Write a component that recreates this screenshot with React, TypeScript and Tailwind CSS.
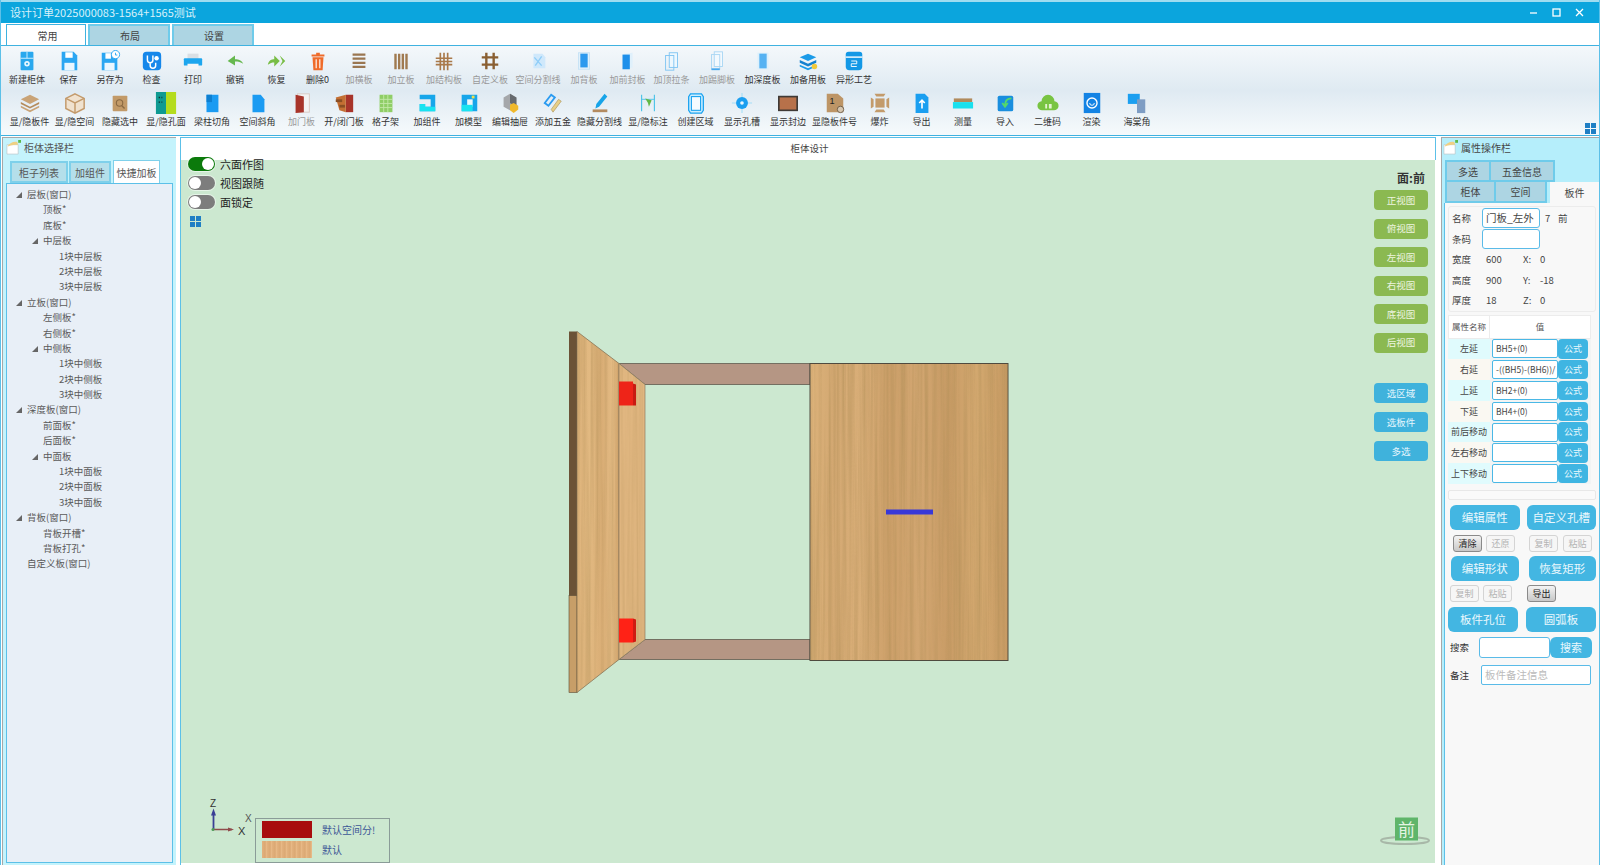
import type { ReactNode } from 'react';

const BLUE = '#2ba6f2';

function Svg({ children, className = 'h-6 w-6' }: { children: ReactNode; className?: string }) {
  return (
    <svg viewBox="0 0 24 24" className={className}>
      {children}
    </svg>
  );
}

const icons: Record<string, ReactNode> = {
  newCab: (
    <>
      <rect x="5" y="2" width="14" height="20" rx="1" fill="#29a8ee" />
      <path d="M12 2v7M5 9h14" stroke="#d8f2ff" strokeWidth="1" />
      <circle cx="12" cy="15" r="3" fill="#e8f8ff" />
      <circle cx="12" cy="15" r="1.2" fill="#29a8ee" />
    </>
  ),
  save: (
    <>
      <path d="M4 2h13l4 4v16H4z" fill={BLUE} />
      <rect x="8" y="2.5" width="8" height="6" fill="#fff" />
      <rect x="7" y="14" width="11" height="8" fill="#e9f6ff" />
    </>
  ),
  saveAs: (
    <>
      <path d="M3 3h13l4 4v15H3z" fill={BLUE} />
      <rect x="7" y="3.5" width="6" height="6" fill="#fff" />
      <rect x="6" y="14" width="11" height="8" fill="#e9f6ff" />
      <circle cx="18" cy="5" r="4.5" fill="#fff" stroke={BLUE} strokeWidth="1" />
      <path d="M18 3v2.5h2" stroke={BLUE} fill="none" />
    </>
  ),
  check: (
    <>
      <rect x="2" y="2" width="20" height="20" rx="4" fill="#1687ea" />
      <path d="M7 6v5a3 3 0 0 0 6 0V6M10 14v3a3 3 0 0 0 6 0v-3" stroke="#fff" strokeWidth="1.6" fill="none" />
      <circle cx="17" cy="9" r="2.4" fill="#fff" />
    </>
  ),
  print: (
    <>
      <rect x="6" y="4" width="12" height="6" fill="#d9dfe4" />
      <rect x="2" y="9" width="20" height="8" rx="1" fill="#1ea6ee" />
      <rect x="6" y="15" width="12" height="6" fill="#f4f6f7" />
    </>
  ),
  undo: <path d="M4 12l8-6v4c4 0 7 1 9 5-3-2-5-2.500-9-2.500V17z" fill="#66b84f" />,
  redo: (
    <>
      <path d="M15 12l-6-6v4C6 10 3 11 2 16c3-2 4-2.500 7-2.500V18z" fill="#78bd45" />
      <path d="M15 6l6 6-6 6 3-6z" fill="#78bd45" />
    </>
  ),
  trash: (
    <>
      <path d="M6 8h12l-1 14H7z" fill="#ef6b2a" />
      <path d="M5 5h14v2H5zM10 3h4v2h-4z" fill="#ef6b2a" />
      <path d="M10 10v10M14 10v10" stroke="#fff" strokeWidth="1.200" />
    </>
  ),
  hBoards: <path d="M5 5h14M5 9.500h14M5 14h14M5 18.500h14" stroke="#9a7650" strokeWidth="2.400" />,
  vBoards: <path d="M6 4v17M10 4v17M14 4v17M18 4v17" stroke="#a07a50" strokeWidth="2.600" />,
  struct: (
    <>
      <path d="M8 3v19M12 3v19M16 3v19" stroke="#a9794a" strokeWidth="1.800" />
      <path d="M3 9h18M3 12.500h18M3 16h18" stroke="#a9794a" strokeWidth="1.800" />
    </>
  ),
  hash: <path d="M8 3v18M16 3v18M3 8h18M3 16h18" stroke="#8a5f32" strokeWidth="2.600" />,
  split: (
    <>
      <path d="M7 4h10l3 4v12H7z" fill="#cfe8fb" />
      <path d="M8 8l8 9M16 7l-7 10" stroke="#8fcdf8" strokeWidth="1.500" />
    </>
  ),
  back: (
    <>
      <rect x="6" y="3" width="12" height="18" fill="#e2f1fb" stroke="#c6e2f5" />
      <rect x="8" y="4" width="8" height="15" fill="#2c99ee" />
    </>
  ),
  front: (
    <>
      <path d="M8 4l9-1v16l-9 2z" fill="#dff0fb" />
      <rect x="6" y="5" width="8" height="16" fill="#1e8fea" />
    </>
  ),
  top: (
    <>
      <rect x="9" y="3" width="9" height="16" fill="#eef8fe" stroke="#7fc4f2" />
      <rect x="5" y="6" width="9" height="16" fill="none" stroke="#7fc4f2" />
    </>
  ),
  kick: (
    <>
      <rect x="9" y="2" width="9" height="16" fill="#f3f9fe" stroke="#a9d6f4" />
      <rect x="6" y="5" width="9" height="16" fill="none" stroke="#a9d6f4" />
      <path d="M6 21h9" stroke="#48a8ee" strokeWidth="2" />
    </>
  ),
  depth: (
    <>
      <rect x="6" y="3" width="12" height="18" fill="#dcf0fc" />
      <rect x="8" y="4" width="8" height="16" fill="#56b2f2" />
    </>
  ),
  spare: (
    <>
      <path d="M12 4l9 4-9 4-9-4z" fill="#1b9be8" />
      <path d="M3 11l9 4 9-4v3l-9 4-9-4z" fill="#1481cf" />
      <path d="M3 16l9 4 9-4v2l-9 4-9-4z" fill="#1b9be8" />
      <circle cx="19" cy="18" r="3" fill="#f1c93b" />
    </>
  ),
  basket: (
    <>
      <path d="M6 2h12a3 3 0 0 1 3 3v13a4 4 0 0 1-4 4H7a4 4 0 0 1-4-4V5a3 3 0 0 1 3-3z" fill="#1398e6" />
      <rect x="3" y="7" width="18" height="1.500" fill="#fff" />
      <path d="M9 12h6M9 15h6M9 18h6M15 12v3M9 15v3" stroke="#fff" strokeWidth="1" fill="none" />
    </>
  ),
  stack: (
    <>
      <path d="M12 3l10 5-10 5L2 8z" fill="#c9a376" />
      <path d="M2 11l10 5 10-5v2l-10 5-10-5z" fill="#b58c5c" />
      <path d="M2 15l10 5 10-5v2l-10 5-10-5z" fill="#c9a376" />
    </>
  ),
  box: (
    <>
      <path d="M12 2l10 5v11l-10 5-10-5V7z" fill="#f0e2cf" stroke="#c39a6b" strokeWidth="1.600" />
      <path d="M2 7l10 5 10-5M12 12v11" stroke="#c39a6b" strokeWidth="1.600" fill="none" />
    </>
  ),
  hide: (
    <>
      <rect x="4" y="4" width="16" height="17" rx="1" fill="#c29a68" />
      <circle cx="11.500" cy="12" r="3.500" fill="none" stroke="#8b6a43" strokeWidth="1.200" />
      <path d="M14 15l3 3" stroke="#8b6a43" strokeWidth="1.500" />
    </>
  ),
  face: (
    <>
      <rect x="1" y="0" width="11" height="24" fill="#0f9a92" />
      <rect x="12" y="0" width="11" height="24" fill="#b4dc1e" />
      <path d="M4 6h4M4 11h4" stroke="#133" strokeWidth="1.500" strokeDasharray="1.500 1.500" />
    </>
  ),
  beam: (
    <>
      <path d="M6 3h13v19H6z" fill="#1b9bf2" />
      <path d="M6 3h6v8H6z" fill="#0e7fd0" />
    </>
  ),
  bevel: <path d="M6 3h9l4 5v14H6z" fill="#1b9bf2" />,
  door: (
    <>
      <rect x="7" y="2" width="13" height="20" fill="#f3f3f3" stroke="#d8c9c2" />
      <path d="M5 3l9 2v17l-9 1z" fill="#a8342a" />
    </>
  ),
  doors: (
    <>
      <rect x="14" y="3" width="8" height="19" fill="#a8342a" />
      <path d="M3 6l11-3v19l-7-2z" fill="#c46f33" />
      <rect x="3" y="8" width="7" height="3" fill="#8a4e23" />
      <rect x="7" y="14" width="6" height="3" fill="#8a4e23" />
    </>
  ),
  grid: (
    <>
      <rect x="5" y="3" width="14" height="19" fill="#8fce66" />
      <path d="M9.500 3v19M14 3v19M5 8h14M5 12.500h14M5 17h14" stroke="#c4e8a8" strokeWidth="1" />
    </>
  ),
  comp: (
    <>
      <path d="M4 3h17v18H4v-8h6v3h6V8H4z" fill="#17a6ea" />
      <path d="M4 13h6v3h11v5H4z" fill="#19e3f0" />
    </>
  ),
  model: (
    <>
      <rect x="4" y="3" width="17" height="18" fill="#17a6ea" />
      <rect x="10" y="8" width="6" height="8" fill="#eef7fb" />
      <rect x="4" y="14" width="12" height="7" fill="#19e3f0" />
      <rect x="15" y="4" width="3" height="3" fill="#f4e04a" />
    </>
  ),
  drawer: (
    <>
      <path d="M5 6l7-4 7 4v10l-7 4-7-4z" fill="#a5a7aa" />
      <path d="M12 2l7 4v10l-7-4z" fill="#666a6e" />
      <path d="M12 14l4-2 5 3v4l-5 4-4-3z" fill="#f0b92c" />
    </>
  ),
  hardware: (
    <>
      <path d="M3 12l7-9 4 3-7 9z" fill="none" stroke="#2a9bf0" strokeWidth="2" />
      <path d="M12 22l9-12-3-2-8 11z" fill="#e8cf86" stroke="#a08a50" strokeWidth=".6" />
    </>
  ),
  pencil: (
    <>
      <path d="M17 2l3 3-9 11-4 2 1-5z" fill="#17a4e8" />
      <rect x="4" y="19" width="16" height="3" fill="#b38b60" />
    </>
  ),
  dim: (
    <>
      <path d="M5 3v18M19 3v18" stroke="#50c4e8" strokeWidth="1.300" />
      <path d="M5 8h14" stroke="#50c4e8" strokeWidth="1" />
      <path d="M9 7l7 2-3 7-1-4z" fill="#62b847" />
    </>
  ),
  area: (
    <>
      <path d="M6 2h12l2 3v15l-2 3H6l-2-3V5z" fill="#cdeeff" stroke="#1ba3f0" strokeWidth="1.400" />
      <rect x="7" y="5" width="10" height="15" fill="#f4fbff" stroke="#1ba3f0" strokeWidth="1.200" />
    </>
  ),
  hole: (
    <>
      <path d="M12 1v22M1 12h22" stroke="#a5def8" strokeWidth="1.200" />
      <circle cx="12" cy="12" r="6.500" fill="#1b9ff0" />
      <circle cx="12" cy="12" r="2" fill="#e8f7ff" />
    </>
  ),
  edge: <rect x="2" y="5" width="20" height="15" fill="#b7714a" stroke="#3f3a36" strokeWidth="1.800" />,
  number: (
    <>
      <path d="M3 2h12l6 5v15H3z" fill="#bd9566" />
      <circle cx="18" cy="19" r="3.500" fill="#d7c7b0" stroke="#6b5a45" />
      <text x="6" y="13" fontSize="10" fill="#222" fontFamily="Liberation Sans">1</text>
    </>
  ),
  explode: (
    <>
      <rect x="7" y="7" width="10" height="10" fill="#c39b6b" />
      <path d="M6 2h12l-2 3H8zM6 22h12l-2-3H8zM2 6v12l3-2V8zM22 6v12l-3-2V8z" fill="#c39b6b" />
    </>
  ),
  exportDoc: (
    <>
      <path d="M5 2h10l4 4v17H5z" fill="#1b9ff0" />
      <path d="M12 18v-8M9 12l3-3 3 3" stroke="#fff" strokeWidth="1.800" fill="none" />
    </>
  ),
  measure: (
    <>
      <rect x="2" y="7" width="20" height="4" fill="#b08a5c" />
      <rect x="1" y="11" width="22" height="7" fill="#19e0ee" />
    </>
  ),
  importIn: (
    <>
      <rect x="4" y="4" width="17" height="17" rx="2" fill="#1a8ede" />
      <path d="M19 7c-5 0-7 3-7 8M9 12l3 4 3-4" stroke="#54d86a" strokeWidth="2" fill="none" />
    </>
  ),
  cloud: (
    <>
      <path d="M6 20a5 5 0 0 1-1-10 7 7 0 0 1 14 0 5 5 0 0 1-1 10z" fill="#78c442" />
      <path d="M9 13h2v5H9zM13 13h3v5h-3z" fill="#e3f4d0" />
    </>
  ),
  render: (
    <>
      <rect x="3" y="1" width="18" height="22" fill="#1483e4" />
      <circle cx="12" cy="12" r="5.500" fill="none" stroke="#fff" strokeWidth="1.500" />
      <path d="M9.500 12a2.500 2.500 0 0 0 5 0" stroke="#fff" fill="none" />
    </>
  ),
  corner: (
    <>
      <rect x="2" y="2" width="13" height="11" fill="#1b9ff0" />
      <rect x="12" y="8" width="9" height="15" fill="#7e9dc4" />
    </>
  ),
};

type ToolItem = { label: string; icon: string; w: string; off?: boolean };

const rowOne: ToolItem[] = [
  { label: '新建柜体', icon: 'newCab', w: 'w-[42px]' },
  { label: '保存', icon: 'save', w: 'w-[41px]' },
  { label: '另存为', icon: 'saveAs', w: 'w-[42px]' },
  { label: '检查', icon: 'check', w: 'w-[41px]' },
  { label: '打印', icon: 'print', w: 'w-[42px]' },
  { label: '撤销', icon: 'undo', w: 'w-[42px]' },
  { label: '恢复', icon: 'redo', w: 'w-[41px]' },
  { label: '删除0', icon: 'trash', w: 'w-[41px]' },
  { label: '加横板', icon: 'hBoards', w: 'w-[42px]', off: true },
  { label: '加立板', icon: 'vBoards', w: 'w-[42px]', off: true },
  { label: '加结构板', icon: 'struct', w: 'w-[44px]', off: true },
  { label: '自定义板', icon: 'hash', w: 'w-[48px]', off: true },
  { label: '空间分割线', icon: 'split', w: 'w-[48px]', off: true },
  { label: '加背板', icon: 'back', w: 'w-[44px]', off: true },
  { label: '加前封板', icon: 'front', w: 'w-[43px]', off: true },
  { label: '加顶拉条', icon: 'top', w: 'w-[45px]', off: true },
  { label: '加踢脚板', icon: 'kick', w: 'w-[46px]', off: true },
  { label: '加深度板', icon: 'depth', w: 'w-[45px]' },
  { label: '加备用板', icon: 'spare', w: 'w-[46px]' },
  { label: '异形工艺', icon: 'basket', w: 'w-[46px]' },
];

const rowTwo: ToolItem[] = [
  { label: '显/隐板件', icon: 'stack', w: 'w-[45px]' },
  { label: '显/隐空间', icon: 'box', w: 'w-[45px]' },
  { label: '隐藏选中', icon: 'hide', w: 'w-[46px]' },
  { label: '显/隐孔面', icon: 'face', w: 'w-[46px]' },
  { label: '梁柱切角', icon: 'beam', w: 'w-[46px]' },
  { label: '空间斜角', icon: 'bevel', w: 'w-[45px]' },
  { label: '加门板', icon: 'door', w: 'w-[43px]', off: true },
  { label: '开/闭门板', icon: 'doors', w: 'w-[42px]' },
  { label: '格子架', icon: 'grid', w: 'w-[41px]' },
  { label: '加组件', icon: 'comp', w: 'w-[42px]' },
  { label: '加模型', icon: 'model', w: 'w-[41px]' },
  { label: '编辑抽屉', icon: 'drawer', w: 'w-[42px]' },
  { label: '添加五金', icon: 'hardware', w: 'w-[44px]' },
  { label: '隐藏分割线', icon: 'pencil', w: 'w-[49px]' },
  { label: '显/隐标注', icon: 'dim', w: 'w-[48px]' },
  { label: '创建区域', icon: 'area', w: 'w-[47px]' },
  { label: '显示孔槽', icon: 'hole', w: 'w-[46px]' },
  { label: '显示封边', icon: 'edge', w: 'w-[46px]' },
  { label: '显隐板件号', icon: 'number', w: 'w-[47px]' },
  { label: '爆炸', icon: 'explode', w: 'w-[43px]' },
  { label: '导出', icon: 'exportDoc', w: 'w-[41px]' },
  { label: '测量', icon: 'measure', w: 'w-[42px]' },
  { label: '导入', icon: 'importIn', w: 'w-[42px]' },
  { label: '二维码', icon: 'cloud', w: 'w-[43px]' },
  { label: '渲染', icon: 'render', w: 'w-[45px]' },
  { label: '海棠角', icon: 'corner', w: 'w-[46px]' },
];

function Tool({ item }: { item: ToolItem }) {
  return (
    <div className={`flex shrink-0 flex-col items-center ${item.w}`}>
      <Svg className="h-[22px] w-[22px] my-px">{icons[item.icon]}</Svg>
      <span
        className={`mt-px h-3 whitespace-nowrap text-[9px] leading-3 ${item.off ? 'text-[#999]' : 'text-[#333]'}`}
      >
        {item.label}
      </span>
    </div>
  );
}

function GridIcon({ className }: { className: string }) {
  return (
    <div className={`grid grid-cols-2 gap-px ${className}`}>
      <span className="bg-[#1f7fc4]" />
      <span className="bg-[#1f7fc4]" />
      <span className="bg-[#1f7fc4]" />
      <span className="bg-[#1f7fc4]" />
    </div>
  );
}

function PanelIcon() {
  return (
    <svg viewBox="0 0 16 16" className="h-[15px] w-[15px]">
      <path d="M1 5h12v10H1z" fill="#fff" stroke="#b8c4c8" strokeWidth=".7" />
      <path d="M2 6c2-3 6-5 10-4l1 3c-3 0-7 0-11 2z" fill="#efd083" />
      <rect x="13" y="0" width="3" height="3" fill="#5cb84a" />
    </svg>
  );
}

const tree: { t: string; l: number; open?: boolean }[] = [
  { t: '层板(窗口)', l: 0, open: true },
  { t: '顶板*', l: 1 },
  { t: '底板*', l: 1 },
  { t: '中层板', l: 1, open: true },
  { t: '1块中层板', l: 2 },
  { t: '2块中层板', l: 2 },
  { t: '3块中层板', l: 2 },
  { t: '立板(窗口)', l: 0, open: true },
  { t: '左侧板*', l: 1 },
  { t: '右侧板*', l: 1 },
  { t: '中侧板', l: 1, open: true },
  { t: '1块中侧板', l: 2 },
  { t: '2块中侧板', l: 2 },
  { t: '3块中侧板', l: 2 },
  { t: '深度板(窗口)', l: 0, open: true },
  { t: '前面板*', l: 1 },
  { t: '后面板*', l: 1 },
  { t: '中面板', l: 1, open: true },
  { t: '1块中面板', l: 2 },
  { t: '2块中面板', l: 2 },
  { t: '3块中面板', l: 2 },
  { t: '背板(窗口)', l: 0, open: true },
  { t: '背板开槽*', l: 1 },
  { t: '背板打孔*', l: 1 },
  { t: '自定义板(窗口)', l: 0 },
];

function TreeRow({ t, l, open }: { t: string; l: number; open?: boolean }) {
  const pad = l === 0 ? 'pl-[20px]' : l === 1 ? 'pl-[36px]' : 'pl-[52px]';
  return (
    <div className={`relative h-[15.4px] whitespace-nowrap text-[9.5px] leading-[15.4px] text-[#5a5a5a] ${pad}`}>
      {open && (
        <svg
          viewBox="0 0 6 6"
          className={`absolute top-[5px] h-[6px] w-[6px] ${l === 0 ? 'left-[9px]' : 'left-[25px]'}`}
        >
          <path d="M6 0v6H0z" fill="#666" />
        </svg>
      )}
      {t}
    </div>
  );
}

function LeftPanel() {
  return (
    <div className="flex h-full w-[174px] shrink-0 flex-col border-l border-t border-[#a8a8a8] bg-[#c4f3fc]">
      <div className="flex h-[22px] items-center gap-[3px] pb-[3px] pl-[3px] text-[10px] text-[#555]">
        <PanelIcon />
        柜体选择栏
      </div>
      <div className="flex h-[23px] items-end gap-px pl-[7px] text-[10px] text-[#555]">
        <div className="flex h-[22px] w-[58px] items-center justify-center border-2 border-[#7fd0ea] bg-[#b5dfea]">柜子列表</div>
        <div className="flex h-[22px] w-[42px] items-center justify-center border-2 border-[#7fd0ea] bg-[#b5dfea]">加组件</div>
        <div className="ml-px flex h-[23px] w-[47px] items-center justify-center border-x border-t border-[#7fd0ea] bg-white pt-px">快捷加板</div>
      </div>
      <div className="ml-[3px] mr-[3px] h-[680px] border border-[#5cc0e8] bg-[#e8eff7] pt-[3px]">
        {tree.map((row) => (
          <TreeRow key={row.t} {...row} />
        ))}
      </div>
    </div>
  );
}

const viewButtons = ['正视图', '俯视图', '左视图', '右视图', '底视图', '后视图'];
const pickButtons = ['选区域', '选板件', '多选'];

function Toggle({ on, label }: { on?: boolean; label: string }) {
  return (
    <div className="flex h-[14px] items-center gap-[5px] text-[11px] leading-[14px] text-[#222]">
      <span
        className={`flex h-[14px] w-[27px] items-center rounded-full px-[1px] shadow-[0_0_0_1px_#ffffff80] ${on ? 'justify-end bg-[#0b7a0b]' : 'justify-start bg-[#7d7d7d]'}`}
      >
        <span className="h-[12px] w-[12px] rounded-full bg-white" />
      </span>
      {label}
    </div>
  );
}

function Scene() {
  return (
    <svg viewBox="181 160 1254 702" className="absolute left-0 top-0 h-full w-full">
      <defs>
        <linearGradient id="woodA" x1="0" x2="1" y1="0" y2="0">
          <stop offset="0" stopColor="#dcb27a" />
          <stop offset=".12" stopColor="#d3a872" />
          <stop offset=".25" stopColor="#d9ae78" />
          <stop offset=".4" stopColor="#cda06a" />
          <stop offset=".55" stopColor="#d2a671" />
          <stop offset=".7" stopColor="#c99c66" />
          <stop offset=".85" stopColor="#d4a970" />
          <stop offset="1" stopColor="#c79a63" />
        </linearGradient>
        <linearGradient id="woodB" x1="0" x2="1" y1="0" y2="0">
          <stop offset="0" stopColor="#dfb47c" />
          <stop offset=".3" stopColor="#e2b981" />
          <stop offset=".6" stopColor="#d9ad75" />
          <stop offset=".85" stopColor="#e4bb84" />
          <stop offset="1" stopColor="#d3a56d" />
        </linearGradient>
        <filter id="grain" x="0" y="0" width="100%" height="100%">
          <feTurbulence type="fractalNoise" baseFrequency="0.28 0.004" numOctaves="3" seed="4" />
          <feColorMatrix values="0 0 0 0 0.45  0 0 0 0 0.28  0 0 0 0 0.1  1.7 0 0 0 -0.6" />
          <feComposite in2="SourceGraphic" operator="in" />
        </filter>
      </defs>

      {/* rails */}
      <path d="M619 363H810V384H645Z" fill="#b59684" stroke="#5f5a4e" strokeWidth=".8" />
      <path d="M619 659H810V639H645Z" fill="#b59684" stroke="#5f5a4e" strokeWidth=".8" />

      {/* open door */}
      <rect x="569" y="331" width="8" height="265" fill="#6b5236" />
      <rect x="569" y="595" width="8" height="97" fill="#c79e68" stroke="#5a4a34" strokeWidth=".6" />
      <path d="M577 331L619 363V659L577 692Z" fill="url(#woodB)" stroke="#77674e" strokeWidth=".7" />
      <path d="M577 331L619 363V659L577 692Z" fill="#000" filter="url(#grain)" opacity=".55" />
      <path d="M619 363L645 384V639L619 659Z" fill="#e0b680" stroke="#8c7d62" strokeWidth=".7" />
      <path d="M619 363L645 384V639L619 659Z" fill="#000" filter="url(#grain)" opacity=".4" />

      {/* hinges */}
      <path d="M619 381H633V405H619Z" fill="#ee2418" />
      <path d="M633 383L636 384V405H633Z" fill="#c81b12" />
      <path d="M619 618H633V642H619Z" fill="#ff2216" />
      <path d="M633 618L636 619V641L633 642Z" fill="#cf1c12" />

      {/* closed door */}
      <rect x="810" y="363" width="198" height="297" fill="url(#woodA)" stroke="#4f4a3e" strokeWidth="1" />
      <rect x="810.500" y="363.500" width="197" height="296" fill="#000" filter="url(#grain)" opacity=".7" />
      <rect x="886" y="509" width="47" height="5" fill="#3838d8" />

      {/* axes */}
      <path d="M213.500 829V812" stroke="#3a3f95" strokeWidth="1.800" />
      <path d="M213.500 808l-2.500 7h5z" fill="#3a3f95" />
      <path d="M213.500 829H232" stroke="#8f4b4b" strokeWidth="1.500" />
      <path d="M234 829l-6-2v4z" fill="#8f4b4b" />
      <circle cx="213" cy="829" r="1.500" fill="#4d9a58" />
      <text x="210" y="806" fontSize="10" fill="#333" fontFamily="Liberation Sans">Z</text>
      <text x="238" y="834" fontSize="11" fill="#333" fontFamily="Liberation Sans">X</text>
      <text x="245" y="821" fontSize="10" fill="#555" fontFamily="Liberation Sans">X</text>

      {/* view cube */}
      <ellipse cx="1405" cy="840" rx="24" ry="3.500" fill="none" stroke="#a8b8a8" strokeWidth="2" />
      <rect x="1395" y="817" width="23" height="23" fill="#5fb56a" />
      <text x="1398" y="835" fontSize="17" fill="#e4f4e2">前</text>
    </svg>
  );
}

function CenterPanel() {
  return (
    <div className="flex h-full w-[1256px] shrink-0 flex-col border-l border-[#5cc0e8]">
      <div className="flex h-[23px] shrink-0 items-center justify-center border-t border-r border-[#5cc0e8] bg-white pb-[2px] pl-[3px] text-[9.5px] text-[#444]">
        柜体设计
      </div>
      <div className="relative h-[703px] w-[1254px] bg-[#cce8d0]">
        <Scene />
        <div className="absolute left-[7px] top-[-3px] flex flex-col gap-[5px]">
          <Toggle on label="六面作图" />
          <Toggle label="视图跟随" />
          <Toggle label="面锁定" />
          <GridIcon className="ml-[2px] mt-[2px] h-[11px] w-[11px]" />
        </div>
        <div className="absolute right-[7px] top-[11px] flex w-[54px] flex-col items-center">
          <div className="mb-[5px] self-end pr-[3px] text-[12px] font-bold leading-[14px] text-[#333]">面:前</div>
          {viewButtons.map((label) => (
            <div
              key={label}
              className="mb-[8.500px] flex h-[20px] w-[54px] items-center justify-center rounded-[4px] bg-[#8bb951] text-[9.500px] text-[#eef5e0]"
            >
              {label}
            </div>
          ))}
          <div className="h-[22px]" />
          {pickButtons.map((label) => (
            <div
              key={label}
              className="mb-[9px] flex h-[20px] w-[54px] items-center justify-center rounded-[4px] bg-[#3fb2dc] text-[9.500px] text-[#e6f6fc]"
            >
              {label}
            </div>
          ))}
        </div>
        <div className="absolute bottom-0 left-[74px] flex h-[45px] w-[135px] flex-col gap-[3px] overflow-hidden border border-[#8a9c98] bg-[#cce8d0] px-[6px] pt-[2px]">
          <div className="flex h-[17px] items-center gap-[10px] whitespace-nowrap text-[10px] text-[#3c5796]">
            <span className="h-[17px] w-[50px] bg-[#a80d0d]" />
            默认空间分!
          </div>
          <div className="flex h-[17px] items-center gap-[10px] text-[10px] text-[#3c5796]">
            <span className="h-[17px] w-[50px] bg-[repeating-linear-gradient(90deg,#e3b27e_0px,#dba873_3px,#ebbe8c_5px)]" />
            默认
          </div>
        </div>
      </div>
    </div>
  );
}

const attrRows = [
  { n: '左延', v: 'BH5+(0)' },
  { n: '右延', v: '-((BH5)-(BH6))/' },
  { n: '上延', v: 'BH2+(0)' },
  { n: '下延', v: 'BH4+(0)' },
  { n: '前后移动', v: '' },
  { n: '左右移动', v: '' },
  { n: '上下移动', v: '' },
];

function MainBtn({ label, className }: { label: string; className: string }) {
  return (
    <div
      className={`flex h-[25px] w-[71px] items-center justify-center rounded-[6px] bg-[#43b6e2] text-[11.500px] text-[#eaf8fd] ${className}`}
    >
      {label}
    </div>
  );
}

function SmallBtn({ label, on }: { label: string; on?: boolean }) {
  return (
    <div
      className={`flex h-[17px] w-[29px] items-center justify-center rounded-[3px] border text-[9px] ${on ? 'border-[#8a8a8a] bg-gradient-to-b from-[#f4f4f4] to-[#c8c8c8] text-[#222]' : 'border-[#d4d4d4] bg-[#f6f6f6] text-[#b4b4b4]'}`}
    >
      {label}
    </div>
  );
}

function InfoRow({ a, b, c, d }: { a: string; b: string; c: string; d: string }) {
  return (
    <div className="flex h-[20.500px] items-center text-[9.500px] text-[#444]">
      <span className="w-[34px]">{a}</span>
      <span className="w-[37px]">{b}</span>
      <span className="w-[17px]">{c}</span>
      <span>{d}</span>
    </div>
  );
}

function RightPanel() {
  return (
    <div className="ml-[1px] flex h-full w-[158px] shrink-0 flex-col border-l border-t border-[#a8a8a8] bg-[#b5eefb]">
      <div className="flex h-[22px] items-center gap-[3px] pb-[3px] pl-[1px] text-[10px] text-[#444]">
        <PanelIcon />
        属性操作栏
      </div>
      <div className="flex h-[22px] pl-[3px] text-[10px] text-[#444]">
        <div className="flex w-[46px] items-center justify-center border-2 border-[#6fcbea] bg-[#add5e3]">多选</div>
        <div className="flex w-[64px] items-center justify-center border-2 border-l-0 border-[#6fcbea] bg-[#add5e3]">五金信息</div>
      </div>
      <div className="flex h-[21px] pl-[3px] text-[10px] text-[#444]">
        <div className="flex w-[51px] items-center justify-center border-2 border-t-0 border-[#6fcbea] bg-[#add5e3]">柜体</div>
        <div className="flex w-[51px] items-center justify-center border-2 border-l-0 border-t-0 border-[#6fcbea] bg-[#add5e3]">空间</div>
        <div className="ml-[3px] flex flex-1 items-center justify-center bg-[#f8f8f8]">板件</div>
      </div>
      <div className="ml-[2px] h-[662px] border-l border-[#5cc0e8] bg-[#f8f8f8] px-[3px] pt-[3px]">
        <div className="mb-[3px] rounded-[3px] border border-[#ececec] pl-[3px] pt-[1px]">
          <div className="flex h-[20px] items-center text-[9.500px] text-[#444]">
            <span className="w-[30px]">名称</span>
            <div className="h-[20px] w-[58px] overflow-hidden whitespace-nowrap rounded-[3px] border border-[#5abbe8] bg-white pl-[3px] text-[10.500px] leading-[18px]">
              门板_左外
            </div>
            <span className="ml-[5px] w-[13px]">7</span>
            <span>前</span>
          </div>
          <div className="mt-px flex h-[20px] items-center text-[9.500px] text-[#444]">
            <span className="w-[30px]">条码</span>
            <div className="h-[20px] w-[58px] rounded-[3px] border border-[#5abbe8] bg-white" />
          </div>
          <div>
            <InfoRow a="宽度" b="600" c="X:" d="0" />
            <InfoRow a="高度" b="900" c="Y:" d="-18" />
            <InfoRow a="厚度" b="18" c="Z:" d="0" />
          </div>
        </div>
        <div className="w-[143px] bg-[#f2f4f4]">
          <div className="flex h-[24px] border border-[#ececec] bg-white text-[8.500px] text-[#555]">
            <div className="flex w-[41px] items-center justify-center border-r border-[#ececec]">属性名称</div>
            <div className="flex w-[100px] items-center justify-center">值</div>
          </div>
          {attrRows.map((r, i) => (
            <div key={r.n} className="flex h-[20.800px] items-center">
              <div
                className={`flex h-full w-[42px] items-center justify-center text-[9px] text-[#444] ${i % 2 === 0 ? 'bg-[#e0fbfd]' : 'bg-[#faf8f2]'}`}
              >
                {r.n}
              </div>
              <div className="ml-[2px] h-[19px] w-[66px] overflow-hidden whitespace-nowrap rounded-[2px] border border-[#4ab8e6] bg-white pl-[3px] text-[8.500px] leading-[17px] text-[#444]">
                {r.v}
              </div>
              <div className="flex h-[19.500px] w-[30px] items-center justify-center rounded-[4px] bg-[#3fb5e2] text-[9px] text-[#e8f8fd]">
                公式
              </div>
            </div>
          ))}
        </div>
        <div className="mt-[6px] h-[10px] rounded-[2px] border border-[#e8e8e8] bg-[#fafafa]" />
        <div className="mt-[5px] flex gap-[7px] pl-[2px]">
          <MainBtn label="编辑属性" className="" />
          <MainBtn label="自定义孔槽" className="" />
        </div>
        <div className="mt-[5px] flex pl-[5px]">
          <SmallBtn label="清除" on />
          <div className="ml-[4px]"><SmallBtn label="还原" /></div>
          <div className="ml-[14px]"><SmallBtn label="复制" /></div>
          <div className="ml-[5px]"><SmallBtn label="粘贴" /></div>
        </div>
        <div className="mt-[4px] flex gap-[10px] pl-[3px]">
          <MainBtn label="编辑形状" className="w-[67px] rounded-[2px]" />
          <MainBtn label="恢复矩形" className="w-[67px] rounded-[2px]" />
        </div>
        <div className="mt-[4px] flex pl-[2px]">
          <SmallBtn label="复制" />
          <div className="ml-[4px]"><SmallBtn label="粘贴" /></div>
          <div className="ml-[15px]"><SmallBtn label="导出" on /></div>
        </div>
        <div className="mt-[5px] flex gap-[8px]">
          <MainBtn label="板件孔位" className="" />
          <MainBtn label="圆弧板" className="" />
        </div>
        <div className="mt-[5px] flex items-center pl-[2px] text-[9.500px] text-[#333]">
          <span className="w-[29px]">搜索</span>
          <div className="h-[21px] w-[71px] rounded-[3px] border border-[#5abbe8] bg-white" />
          <div className="flex h-[21px] w-[42px] items-center justify-center rounded-[6px] bg-[#43b6e2] text-[11px] text-[#eaf8fd]">搜索</div>
        </div>
        <div className="mt-[7px] flex items-center pl-[2px] text-[9.500px] text-[#333]">
          <span className="w-[31px]">备注</span>
          <div className="flex h-[20px] w-[110px] items-center rounded-[2px] border border-[#5abbe8] bg-white pl-[3px] text-[10.500px] text-[#bbb]">
            板件备注信息
          </div>
        </div>
      </div>
    </div>
  );
}

export default function App() {
  return (
    <div className="flex h-[865px] w-[1600px] flex-col overflow-hidden border-x border-[#5cc0e8] bg-white font-['Noto_Sans_CJK_SC',sans-serif]">
      <div className="flex h-[23px] shrink-0 items-center justify-between border-t-2 border-[#9fdcf0] bg-[#0ba5dd] pl-[9px] pr-[15px] text-[11px] text-[#d8f1fa]">
        <span>设计订单2025000083-1564+1565测试</span>
        <div className="flex items-center gap-[14px]">
          <svg viewBox="0 0 9 9" className="h-[9px] w-[9px]"><path d="M1 5h7" stroke="#fff" strokeWidth="1.300" /></svg>
          <svg viewBox="0 0 9 9" className="h-[9px] w-[9px]"><rect x="1" y="1" width="7" height="7" fill="none" stroke="#fff" strokeWidth="1.300" /></svg>
          <svg viewBox="0 0 9 9" className="h-[9px] w-[9px]"><path d="M1 1l7 7M8 1l-7 7" stroke="#fff" strokeWidth="1.300" /></svg>
        </div>
      </div>

      <div className="flex h-[22px] shrink-0 items-end gap-[2px] pl-[5px] text-[10px] text-[#444]">
        <div className="flex h-[21px] w-[80px] items-center justify-center border-x border-t border-[#3fb2e0] bg-white pl-[3px]">常用</div>
        <div className="flex h-[21px] w-[82px] items-center justify-center border-2 border-b-0 border-[#6fcbea] bg-[#add5e3] pl-[2px]">布局</div>
        <div className="flex h-[21px] w-[82px] items-center justify-center border-2 border-b-0 border-[#6fcbea] bg-[#add5e3] pl-[2px]">设置</div>
      </div>

      <div className="relative h-[91px] shrink-0 border-y border-[#3fb2e0] bg-gradient-to-b from-[#f4f8fb] via-[#dfeaf2] to-[#f6fafc]">
        <div className="flex h-[45px] pl-[5px] pt-[3px]">
          {rowOne.map((item) => (
            <Tool key={item.label} item={item} />
          ))}
        </div>
        <div className="flex pl-[6px]">
          {rowTwo.map((item) => (
            <Tool key={item.label} item={item} />
          ))}
        </div>
        <GridIcon className="absolute bottom-px right-[3px] h-[11px] w-[11px]" />
      </div>

      <div className="flex h-[729px] gap-[4px] pl-px pt-[1px]">
        <LeftPanel />
        <CenterPanel />
        <RightPanel />
      </div>
    </div>
  );
}
